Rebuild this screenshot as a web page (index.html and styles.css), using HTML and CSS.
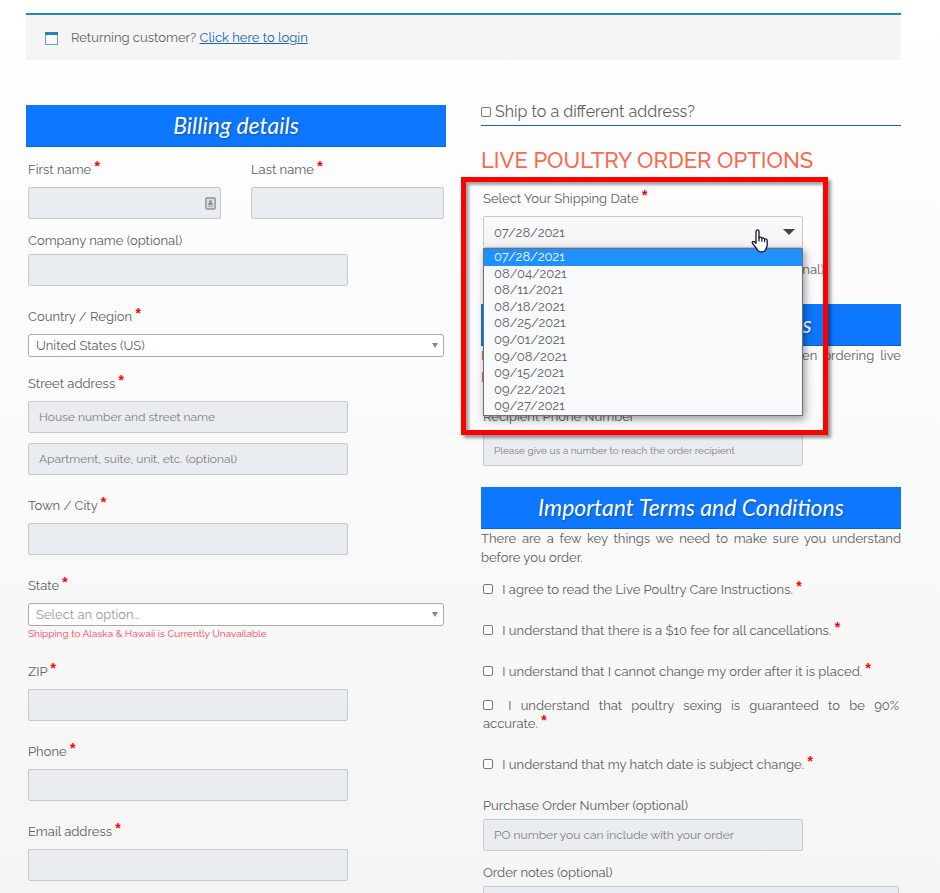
FILE: index.html
```html
<!DOCTYPE html>
<html lang="en">
<head>
  <meta charset="UTF-8">
  <meta name="viewport" content="width=device-width, initial-scale=1.0">
  <title>Checkout</title>
  <link rel="stylesheet" href="styles.css">
</head>
<body>
<main class="checkout">
  <div class="notice">
    <svg class="notice-icon" viewBox="0 0 13 13" width="13" height="13" aria-hidden="true">
      <rect x="0.5" y="0.5" width="12" height="12" fill="#fbfbfb" stroke="#5b9fca"/>
      <rect width="13" height="3" fill="#1e85be"/>
    </svg>
    <p>Returning customer? <a href="#login">Click here to login</a></p>
  </div>

  <form class="columns">
    <section class="billing">
      <h3 class="banner">Billing details</h3>
      <div class="fields">
        <div class="row">
          <div class="field">
            <label for="first">First name <span class="required">*</span></label>
            <div class="input-wrap">
              <input type="text" id="first">
              <svg class="autofill" viewBox="0 0 12 14" width="11" height="13" aria-hidden="true">
                <rect x="1" y="1" width="10" height="12" rx="1" fill="#dcdee1" stroke="#929497" stroke-width="1.6"/>
                <circle cx="6" cy="4.8" r="1.4" fill="#85878a"/>
                <path d="M3.6 8.4c0-1.6 1-2.2 2.4-2.2s2.4.6 2.4 2.2zM3.5 10.3h5" fill="#85878a" stroke="#929497" stroke-width=".8"/>
              </svg>
            </div>
          </div>
          <div class="field">
            <label for="last">Last name <span class="required">*</span></label>
            <input type="text" id="last">
          </div>
        </div>
        <div class="field optional">
          <label for="company">Company name (optional)</label>
          <input type="text" id="company">
        </div>
        <div class="field country">
          <label for="country">Country / Region <span class="required">*</span></label>
          <div class="select-wrap">
            <select id="country"><option>United States (US)</option></select>
          </div>
        </div>
        <div class="field">
          <label for="street">Street address <span class="required">*</span></label>
          <input type="text" id="street" placeholder="House number and street name">
          <input type="text" class="second" aria-label="Apartment" placeholder="Apartment, suite, unit, etc. (optional)">
        </div>
        <div class="field">
          <label for="city">Town / City <span class="required">*</span></label>
          <input type="text" id="city">
        </div>
        <div class="field">
          <label for="state">State <span class="required">*</span></label>
          <div class="select-wrap">
            <select id="state" class="empty"><option>Select an option…</option></select>
          </div>
          <p class="warning">Shipping to Alaska &amp; Hawaii is Currently Unavailable</p>
        </div>
        <div class="field">
          <label for="zip">ZIP <span class="required">*</span></label>
          <input type="text" id="zip">
        </div>
        <div class="field">
          <label for="phone">Phone <span class="required">*</span></label>
          <input type="tel" id="phone">
        </div>
        <div class="field">
          <label for="email">Email address <span class="required">*</span></label>
          <input type="email" id="email">
        </div>
      </div>
    </section>

    <section class="shipping">
      <h3 class="ship-to">
        <label><input type="checkbox"> Ship to a different address?</label>
      </h3>
      <h2>LIVE POULTRY ORDER OPTIONS</h2>

      <div class="date-area">
        <div class="field date-field">
          <label for="date">Select Your Shipping Date <span class="required">*</span></label>
          <div class="date-select">
            <select id="date"><option>07/28/2021</option></select>
            <ul class="date-list" role="listbox" aria-label="Shipping dates">
              <li class="active" role="option" aria-selected="true">07/28/2021</li>
              <li role="option">08/04/2021</li>
              <li role="option">08/11/2021</li>
              <li role="option">08/18/2021</li>
              <li role="option">08/25/2021</li>
              <li role="option">09/01/2021</li>
              <li role="option">09/08/2021</li>
              <li role="option">09/15/2021</li>
              <li role="option">09/22/2021</li>
              <li role="option">09/27/2021</li>
            </ul>
            <svg class="pointer" viewBox="0 0 18 24" width="18" height="24" aria-hidden="true">
              <path d="M5 2.6C5 .4 8 .4 8 2.6V9c.3-1.2 2.7-1.1 2.9.5.5-1 2.5-.8 2.7.8.6-.8 2.6-.4 2.6 1.3v4.2c0 2.200-1.200 3.400-1.600 5-.4 1.300-1.500 2-3.400 2H9.300c-1.500 0-2.400-.8-3-2C5.200 18.500 3.400 17 1.700 14.700.5 13 2.300 11.800 3.600 12.900L5 14.200z" fill="#fff" stroke="#15152a" stroke-width="1.3" stroke-linejoin="round"/>
              <path d="M8 8.500v4M10.900 9.500v3.300M13.600 10.500v2.800" fill="none" stroke="#15152a" stroke-width="1.2"/>
            </svg>
          </div>
        </div>
        <p class="date-note">(optional)</p>
        <div class="highlight"></div>
      </div>

      <h3 class="banner">Recipient Contact Details</h3>
      <p class="intro"><strong>Please</strong> enter the number we can reach you on when ordering live <strong>poultry.</strong></p>
      <div class="fields">
        <div class="field recipient">
          <label for="recipient">Recipient Phone Number</label>
          <input type="tel" id="recipient" class="small" placeholder="Please give us a number to reach the order recipient">
        </div>
      </div>

      <h3 class="banner">Important Terms and Conditions</h3>
      <p class="intro">There are a few key things we need to make sure you understand before you order.</p>
      <div class="fields terms">
        <label class="term"><input type="checkbox"> I agree to read the Live Poultry Care Instructions. <span class="required">*</span></label>
        <label class="term"><input type="checkbox"> I understand that there is a $10 fee for all cancellations. <span class="required">*</span></label>
        <label class="term"><input type="checkbox"> I understand that I cannot change my order after it is placed. <span class="required">*</span></label>
        <label class="term long"><input type="checkbox"> I understand that poultry sexing is guaranteed to be 90% accurate.&nbsp;<span class="required">*</span></label>
        <label class="term"><input type="checkbox"> I understand that my hatch date is subject change. <span class="required">*</span></label>
        <div class="field optional">
          <label for="po">Purchase Order Number (optional)</label>
          <input type="text" id="po" placeholder="PO number you can include with your order">
        </div>
        <div class="field optional">
          <label for="notes">Order notes (optional)</label>
          <textarea id="notes" rows="3"></textarea>
        </div>
      </div>
    </section>
  </form>
</main>
</body>
</html>
```
FILE: styles.css
```css
* {
    margin: 0;
    padding: 0;
    box-sizing: border-box;
}

body {
    min-height: 100vh;
    background: linear-gradient(#ffffff, #f4f4f4);
    color: #606060;
    font-family: Raleway, Lato, sans-serif;
    font-size: 13px;
    font-weight: 400;
    font-variant-numeric: oldstyle-nums;
    line-height: 18px;
}

input, select, textarea {
    font-family: inherit;
    font-variant-numeric: inherit;
    color: inherit;
}

.checkout {
    padding: 13px 39px 0 26px;
}

.notice {
    display: flex;
    align-items: center;
    gap: 13px;
    padding: 14px 19px 13px;
    margin-bottom: 45px;
    border-top: 2px solid #1e85be;
    background: #f5f5f5;
}

.notice a {
    color: #1262c0;
}

.columns {
    display: grid;
    grid-template-columns: 1fr 1fr;
    gap: 35px;
}

.banner {
    height: 42px;
    border-bottom: 1px solid #0f62c0;
    background: #0d77ff;
    color: #fff;
    font-family: Satisfy, Lato, cursive;
    font-size: 23px;
    font-style: italic;
    font-weight: 400;
    line-height: 40px;
    text-align: center;
    text-shadow: 1px 1px 2px rgba(0,0,0,0.3);
}

.fields {
    padding: 0 2px;
}

.billing .fields {
    padding-top: 14px;
}

.row {
    display: grid;
    grid-template-columns: 1fr 1fr;
    gap: 30px;
    margin-bottom: -9px;
}

.field {
    margin-bottom: 22px;
}

.field.country {
    margin-bottom: 18px;
}

.field label {
    display: block;
    margin-bottom: 8px;
}

.field.optional label {
    margin-bottom: 4px;
}

.required {
    position: relative;
    top: -3px;
    color: #f00;
    font-family: "Liberation Sans", Arial, sans-serif;
    font-size: 14px;
    font-weight: 700;
    line-height: 1px;
}

.field input {
    display: block;
    width: 100%;
    max-width: 320px;
    height: 32px;
    padding: 0 10px;
    border: 1px solid #c8c9cb;
    border-radius: 2px;
    background: #e9ecf1;
    font-size: 12px;
}

.field input.second {
    margin-top: 10px;
}

.field input.small {
    font-size: 10px;
}

.field input::placeholder {
    color: #808080;
    opacity: 1;
}

.input-wrap, .select-wrap {
    position: relative;
}

.autofill {
    position: absolute;
    top: 10px;
    right: 5px;
}

.select-wrap select {
    display: block;
    width: 100%;
    height: 23px;
    padding: 0 7px;
    border: 1px solid #aaa;
    border-radius: 3px;
    background: #fff;
    font-size: 13px;
    appearance: none;
}

.select-wrap select.empty {
    color: #999;
}

.select-wrap::after {
    content: "";
    position: absolute;
    top: 9px;
    right: 6px;
    border: 3px solid transparent;
    border-top: 5px solid #888;
    border-bottom: 0;
}

.warning {
    color: #ff4055;
    font-size: 10px;
    line-height: 15px;
}

.ship-to {
    height: 21px;
    margin-bottom: 20px;
    border-bottom: 1px solid #1565b8;
    font-size: 16px;
    font-weight: 400;
    line-height: 14px;
}

input[type="checkbox"] {
    width: 10px;
    height: 10px;
    border: 1px solid #777;
    border-radius: 2px;
    background: #fff;
    appearance: none;
}

h2 {
    margin-bottom: 16px;
    color: #f76b50;
    font-size: 22px;
    font-weight: 500;
    line-height: 28px;
}

.date-area {
    position: relative;
    padding-left: 2px;
    margin-bottom: 25px;
}

.date-field {
    margin-bottom: 13px;
}

.date-select {
    position: relative;
    z-index: 2;
    max-width: 320px;
}

.date-select select {
    display: block;
    width: 100%;
    height: 32px;
    padding: 0 10px;
    border: 1px solid #c8c9cb;
    border-radius: 2px;
    background: linear-gradient(#fafbfc, #f2f3f5);
    font-size: 13px;
    appearance: none;
}

.date-select::after {
    content: "";
    position: absolute;
    top: 13px;
    right: 8px;
    border: 6px solid transparent;
    border-top-color: #444;
    border-bottom: 0;
}

.date-list {
    position: absolute;
    top: 32px;
    left: 0;
    right: 0;
    display: flex;
    flex-direction: column;
    height: 168px;
    border: 1px solid #6d7175;
    background: #f7f9fb;
    box-shadow: 2px 3px 8px rgba(0,0,0,0.4);
    font-size: 13px;
    line-height: 16px;
    list-style: none;
}

.date-list li {
    flex: 1;
    padding-left: 10px;
}

.date-list .active {
    background: #1e90ff;
    color: #fff;
}

.pointer {
    position: absolute;
    top: 13px;
    right: 34px;
    z-index: 1;
}

.date-note {
    max-width: 341px;
    text-align: right;
}

.highlight {
    position: absolute;
    top: -13px;
    left: -20px;
    z-index: 3;
    width: 367px;
    height: 258px;
    border: 5px solid #f00;
    box-shadow: 3px 3px 3px rgba(0,0,0,0.4), inset 3px 3px 3px rgba(0,0,0,0.35);
    pointer-events: none;
}

.intro {
    line-height: 19px;
    text-align: justify;
}

.intro strong {
    color: #c0504d;
    font-weight: 400;
}

.recipient {
    padding-top: 24px;
    margin-bottom: 21px;
}

.terms {
    padding-top: 14px;
}

.term {
    display: block;
    margin-bottom: 23px;
    text-align: justify;
}

.term input {
    margin-right: 6px;
}

.term.long {
    margin-top: -7px;
}

.terms .field {
    margin-bottom: 13px;
}

textarea {
    display: block;
    width: 100%;
    padding: 8px 10px;
    border: 1px solid #c8c9cb;
    border-radius: 2px;
    background: #e9ecf1;
    font-size: 12px;
    resize: none;
}
```
